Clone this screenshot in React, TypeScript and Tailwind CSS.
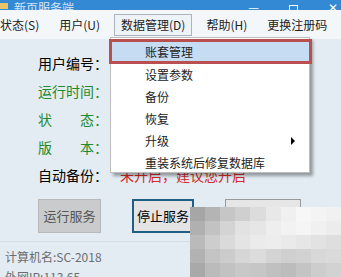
import React from "react";

const FONT = { fontFamily: '"Noto Sans CJK SC", "Noto Sans", sans-serif' };

function MenuItem({ label, active }: { label: string; active?: boolean }): React.ReactElement {
  return (
    <div
      className={
        active
          ? "h-[22px] px-[6px] flex items-center border border-[#a9b4bf] bg-[#eef3f8]"
          : "h-[22px] px-[6px] flex items-center"
      }
    >
      {label}
    </div>
  );
}

function Row({ label, color, children }: { label: React.ReactNode; color: string; children?: React.ReactNode }): React.ReactElement {
  return (
    <div className="h-[28px] flex items-center whitespace-nowrap">
      <div className={`w-[82px] ${color}`}>{label}</div>
      {children}
    </div>
  );
}

function Spread({ a, b }: { a: string; b: string }): React.ReactElement {
  return (
    <div className="w-[70px] flex justify-between">
      <span>{a}</span>
      <span>{b}：</span>
    </div>
  );
}

const BLUR = [
  "#a6a6a6", "#b4b4b4", "#c6c6c6", "#cfcfcf", "#dcdcdc", "#e8e8e8", "#f0f0f0", "#f7f7f7", "#f4f4f4", "#f1f1f1",
  "#b0b0b0", "#c2c2c2", "#d4d4d4", "#e2e2e2", "#e6e6e6", "#eeeeee", "#f2f2f2", "#f5f5f5", "#f0f0f0", "#ececec",
  "#bababa", "#cdcdcd", "#dadada", "#e4e4e4", "#ebebeb", "#ededed", "#eaeaea", "#e6e6e6", "#e2e2e2", "#dedede",
  "#b2b2b2", "#c4c4c4", "#cccccc", "#d6d6d6", "#dcdcdc", "#d4d4d4", "#cfcfcf", "#d2d2d2", "#d8d8d8", "#dadada",
  "#a9a9a9", "#bbbbbb", "#c2c2c2", "#c8c8c8", "#c6c6c6", "#c0c0c0", "#bcbcbc", "#c4c4c4", "#cdcdcd", "#d2d2d2",
];

export default function App(): React.ReactElement {
  return (
    <div className="relative w-[341px] h-[277px] overflow-hidden bg-[#e2ecf2] text-black" style={FONT}>
      {/* title bar, cut off at the top */}
      <div className="h-[10px] bg-[#3389d4] flex items-end overflow-hidden text-white text-[12px] leading-none">
        <div className="w-[8px] h-[6px] bg-[#e9c46a] mb-[1px]" />
        <span className="ml-[6px] translate-y-[4px] opacity-80">新页服务端</span>
        <div className="ml-auto flex items-end gap-[30px] pr-[3px]">
          <span className="translate-y-[3px]">—</span>
          <span className="w-[9px] h-[9px] border border-white translate-y-[4px]" />
          <span className="translate-y-[3px]">✕</span>
        </div>
      </div>

      {/* menu bar */}
      <div className="h-[29px] bg-[#f4f7fa] flex items-center gap-[8px] text-[12px] text-[#222] -ml-[6px]">
        <MenuItem label="状态(S)" />
        <MenuItem label="用户(U)" />
        <MenuItem label="数据管理(D)" active />
        <MenuItem label="帮助(H)" />
        <MenuItem label="更换注册码" />
      </div>

      {/* body */}
      <div className="pl-[38px] pt-[10px] text-[14px]">
        <Row label="用户编号：" color="text-black" />
        <Row label="运行时间：" color="text-[#1f8a2b]" />
        <Row label={<Spread a="状" b="态" />} color="text-[#1f8a2b]" />
        <Row label={<Spread a="版" b="本" />} color="text-[#1f8a2b]" />
        <Row label="自动备份：" color="text-black">
          <span className="text-[#d42a2a]">未开启，建议您开启</span>
        </Row>

        <div className="mt-[10px] flex items-start gap-[31px] text-[13px]">
          <div className="w-[63px] h-[34px] bg-[#c9cbcc] border border-[#b8b8b8] text-[#555] flex items-center justify-center">
            运行服务
          </div>
          <div className="w-[62px] h-[34px] bg-[#e4e4e4] border-2 border-[#1f5f86] flex items-center justify-center">
            停止服务
          </div>
          <div className="w-[76px] h-[34px] bg-[#e6e6e6] border border-[#9a9a9a]" />
        </div>
      </div>

      {/* footer info */}
      <div className="mt-[8px] border-t border-[#d3dde3] pl-[5px] pt-[5px] text-[12px] text-[#6d6d6d] leading-[20px]">
        <div>计算机名:SC-2018</div>
        <div>外网IP:113.65</div>
      </div>

      {/* dropdown menu */}
      <div className="absolute left-[110px] top-[37px] w-[200px] h-[136px] bg-white border border-[#bdbdbd] shadow-[3px_3px_3px_rgba(0,0,0,0.35)] text-[12px] text-[#222]">
        <div className="absolute -left-[2px] top-[1px] w-[203px] h-[25px] bg-[#c6dcf3] border-[3px] border-[#b9504f] pl-[33px] flex items-center">
          账套管理
        </div>
        <div className="pt-[26px] pl-[34px]">
          <div className="h-[22px] flex items-center">设置参数</div>
          <div className="h-[22px] flex items-center">备份</div>
          <div className="h-[22px] flex items-center">恢复</div>
          <div className="h-[22px] flex items-center justify-between pr-[14px]">
            <span>升级</span>
            <span className="w-0 h-0 border-y-[4px] border-y-transparent border-l-[4px] border-l-black" />
          </div>
          <div className="h-[22px] flex items-center">重装系统后修复数据库</div>
        </div>
      </div>

      {/* pixelated blur patch */}
      <div className="absolute left-[190px] top-[207px] w-[151px] h-[70px] grid grid-cols-10 grid-rows-5">
        {BLUR.map((c, i) => (
          <div key={i} style={{ backgroundColor: c }} />
        ))}
      </div>
    </div>
  );
}
